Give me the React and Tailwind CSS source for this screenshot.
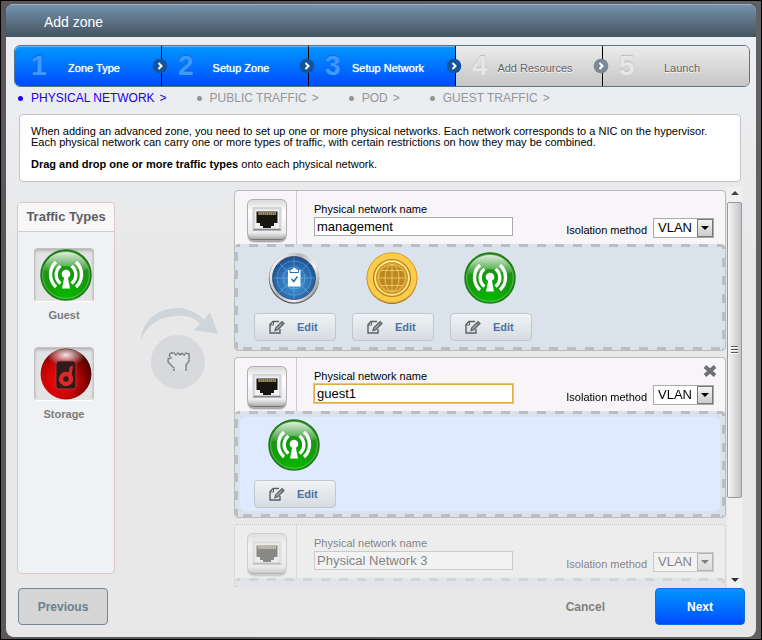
import React, { useState } from 'react';

const steps = [
    { label: 'Zone Type', done: true },
    { label: 'Setup Zone', done: true },
    { label: 'Setup Network', done: true },
    { label: 'Add Resources', done: false },
    { label: 'Launch', done: false },
];

const subSteps = ['PHYSICAL NETWORK', 'PUBLIC TRAFFIC', 'POD', 'GUEST TRAFFIC'];

const networks = [
    { id: 1, name: 'management', traffic: ['management', 'public', 'guest'] },
    { id: 2, name: 'guest1', traffic: ['guest'], removable: true, active: true },
    { id: 3, name: 'Physical Network 3', traffic: [], disabled: true },
];

// Gradients shared by all the round icons
function IconDefs() {
    return (
        <svg className="absolute h-0 w-0" aria-hidden="true">
            <defs>
                <radialGradient id="green" cx="50%" cy="95%" r="95%">
                    <stop offset="0" stopColor="#08b800" />
                    <stop offset="0.5" stopColor="#149c0c" />
                    <stop offset="1" stopColor="#2a8a22" />
                </radialGradient>
                <linearGradient id="gloss" x1="0" y1="0" x2="0" y2="1">
                    <stop offset="0" stopColor="#fff" stopOpacity="0.85" />
                    <stop offset="1" stopColor="#fff" stopOpacity="0.08" />
                </linearGradient>
                <radialGradient id="red" cx="35%" cy="65%" r="70%">
                    <stop offset="0" stopColor="#f00808" />
                    <stop offset="0.5" stopColor="#c80404" />
                    <stop offset="1" stopColor="#4a0000" />
                </radialGradient>
                <radialGradient id="redGloss" cx="50%" cy="30%" r="55%">
                    <stop offset="0" stopColor="#fff" stopOpacity="0.9" />
                    <stop offset="1" stopColor="#fff" stopOpacity="0" />
                </radialGradient>
                <linearGradient id="chrome" x1="0" y1="0.2" x2="1" y2="0.8">
                    <stop offset="0" stopColor="#fff" />
                    <stop offset="0.4" stopColor="#b8b8b8" />
                    <stop offset="0.7" stopColor="#f4f4f4" />
                    <stop offset="1" stopColor="#8a8a8a" />
                </linearGradient>
                <radialGradient id="blue" cx="50%" cy="60%" r="60%">
                    <stop offset="0" stopColor="#4aa0dc" />
                    <stop offset="0.6" stopColor="#2c70b4" />
                    <stop offset="1" stopColor="#1c4c8c" />
                </radialGradient>
                <linearGradient id="plate" x1="0" y1="0" x2="0" y2="1">
                    <stop offset="0" stopColor="#d8d6d7" />
                    <stop offset="0.3" stopColor="#fff" />
                    <stop offset="0.85" stopColor="#ececec" />
                    <stop offset="1" stopColor="#b4b4b4" />
                </linearGradient>
            </defs>
        </svg>
    );
}

function GuestIcon() {
    return (
        <svg viewBox="0 0 52 52" className="size-[52px]">
            <circle cx="26" cy="26" r="25" fill="url(#green)" stroke="#1f7a18" strokeWidth="1.5" />
            <circle cx="26" cy="26" r="23.300" fill="none" stroke="#6cc064" strokeWidth="0.800" />
            <path d="M4 22 C5 9 15 3 26 3 C37 3 46 10 48 20 C40 24 34 17 25 17 C17 17 11 24 4 22Z" fill="url(#gloss)" />
            <g fill="none" stroke="#fff" strokeWidth="3.400">
                <path d="M20.500 17 A11 11 0 0 0 20.500 34.500" />
                <path d="M31.500 17 A11 11 0 0 1 31.500 34.500" />
                <path d="M16 13 A17 17 0 0 0 16 38" />
                <path d="M36 13 A17 17 0 0 1 36 38" />
            </g>
            <circle cx="26" cy="25" r="4.300" fill="#fff" />
            <path d="M24.500 27 H27.500 L30 39.500 H22 Z" fill="#fff" />
        </svg>
    );
}

function StorageIcon() {
    return (
        <svg viewBox="0 0 52 52" className="size-[52px]">
            <circle cx="26" cy="26" r="25.400" fill="url(#red)" />
            <ellipse cx="26" cy="11" rx="18" ry="10" fill="url(#redGloss)" />
            <rect x="16" y="13" width="20" height="28" rx="3" fill="#321a1a" stroke="#a84848" strokeWidth="0.800" />
            <circle cx="26" cy="31" r="5" fill="none" stroke="#e02828" strokeWidth="4.400" />
            <path d="M28.500 27 L29.500 19 L33 17.500 L31.500 28Z" fill="#e02828" />
        </svg>
    );
}

function ManagementIcon() {
    return (
        <svg viewBox="0 0 52 52" className="size-[52px]">
            <circle cx="26" cy="26.500" r="25.200" fill="#5a5a5c" />
            <circle cx="26.300" cy="25.500" r="24.900" fill="url(#chrome)" />
            <circle cx="26" cy="26" r="21.500" fill="url(#blue)" stroke="#2a4a70" strokeWidth="0.800" />
            <g fill="none" stroke="#8cd0f4" strokeWidth="0.800" opacity="0.500">
                <circle cx="26" cy="26" r="17" />
                <circle cx="26" cy="26" r="11" />
                <path d="M26 5 V47 M5 26 H47 M11 11 L41 41 M41 11 L11 41" />
            </g>
            <path d="M20 18 H32.500 V34.500 H20 Z" fill="#fff" />
            <path d="M22 20.500 V17 H24 Q26.200 13 28.500 17 H30.500 V20.500 Z" fill="#fff" stroke="#2c70b4" strokeWidth="1" />
            <path d="M23.500 27 L25.800 29.500 L29.500 24.500" fill="none" stroke="#2c70b4" strokeWidth="1.600" />
        </svg>
    );
}

function PublicIcon() {
    return (
        <svg viewBox="0 0 52 52" className="size-[52px]">
            <circle cx="26" cy="26.600" r="25.300" fill="#9a6c14" />
            <circle cx="26" cy="25.700" r="25" fill="#fbcb4c" stroke="#d8a02c" strokeWidth="1" />
            <circle cx="26" cy="26" r="18.500" fill="#e8b030" stroke="#b8821c" strokeWidth="1.200" />
            <circle cx="26" cy="26" r="16.800" fill="#d49c28" stroke="#fff0a0" strokeWidth="1.400" />
            <circle cx="26" cy="26" r="13.500" fill="#bd8820" />
            <g fill="none" stroke="#f0c868" strokeWidth="0.900">
                <circle cx="26" cy="26" r="13.500" />
                <ellipse cx="26" cy="26" rx="7" ry="13.500" />
                <path d="M26 12.500 V39.500 M12.500 26 H39.500 M15 18.500 H37 M15 33.500 H37" />
            </g>
        </svg>
    );
}

function PortIcon() {
    return (
        <svg viewBox="0 0 42 46" className="h-[46px] w-[42px]">
            <rect x="1" y="5" width="40" height="40" rx="7" fill="#000" opacity="0.120" />
            <rect x="2" y="4" width="38" height="40" rx="6" fill="#000" opacity="0.200" />
            <rect x="2" y="4" width="38" height="38" rx="5" fill="#77757a" />
            <rect x="1.500" y="1.500" width="39" height="39" rx="5" fill="url(#plate)" stroke="#b4aeb2" strokeWidth="1" />
            <path d="M6.500 9 H35.500 V32.500 H6.500 Z" fill="#d3d5d8" />
            <path d="M6.500 32.500 L8.500 30.500 H33.500 L35.500 32.500Z" fill="#85888c" />
            <path d="M9 11.500 H33 V30.500 H9 Z" fill="#f2f2f4" />
            <path d="M10.500 13.500 H31.500 V25 H28 V28 H25 V30 H17 V28 H14 V25 H10.500 Z" fill="#17150f" />
            <path d="M12.500 15.500 H30" stroke="#d8c080" strokeWidth="3" strokeDasharray="1.200 0.800" />
        </svg>
    );
}

function EditIcon() {
    return (
        <svg viewBox="0 0 16 14" className="h-[14px] w-4" fill="none" stroke="#5c6064" strokeWidth="1.400">
            <path d="M10 1.500 H4 L1 4.500 V13 H11 V9" />
            <path d="M4.500 1.500 V5 H1" strokeWidth="1" />
            <path d="M6 10.500 L6.800 7.800 L13 1.500 L15 3.500 L8.700 9.700 Z" fill="#a4a8ac" strokeWidth="1.200" />
            <path d="M11.600 3 L13.600 5" strokeWidth="1" />
        </svg>
    );
}

const trafficIcons = {
    management: ManagementIcon,
    public: PublicIcon,
    guest: GuestIcon,
    storage: StorageIcon,
};

function Stepper() {
    return (
        <ol className="mr-[6px] ml-2 mt-2 flex h-[42px] rounded-md border border-[#5b7388]">
            {steps.map((step, index) => (
                <li
                    key={step.label}
                    className={`relative flex flex-1 items-center first:rounded-l-[5px] last:rounded-r-[5px] ${
                        step.done
                            ? 'bg-linear-to-b from-[#0d96ff] to-[#0048ff] text-white shadow-[inset_0_1px_#6cb4f4]'
                            : 'bg-linear-to-b from-[#ececec] to-[#c6c6c6] text-[#646464]'
                    } ${index < steps.length - 1 ? 'border-r border-black' : ''}`}
                >
                    <span
                        className={`w-8 pl-4 text-[28px] leading-7 font-bold ${
                            step.done
                                ? 'text-[#4098fd] [text-shadow:0_-1px_1px_#1468d8]'
                                : 'text-[#e6e6e6] [text-shadow:0_-1px_1px_#bcbcbc]'
                        }`}
                    >
                        {index + 1}
                    </span>
                    <span
                        className={`flex-1 pt-1 pr-5 text-center text-[11px] ${
                            step.done ? '[text-shadow:0_0_1px_#fff]' : '[text-shadow:0_1px_1px_#fff]'
                        }`}
                    >
                        {step.label}
                    </span>
                    {index < steps.length - 1 && (
                        <svg viewBox="0 0 16 16" className="absolute -right-[7px] z-10 size-4">
                            <circle cx="8" cy="8" r="7.300" fill={step.done ? '#15549c' : '#7c8898'} />
                            <path d="M6.500 5 L9.500 8 L6.500 11" fill="none" stroke="#fff" strokeWidth="2" />
                        </svg>
                    )}
                </li>
            ))}
        </ol>
    );
}

function TrafficType({ type, label }) {
    const Icon = trafficIcons[type];
    return (
        <div className="flex flex-col items-center">
            <div className="flex h-[54px] w-[60px] items-center justify-center rounded border border-[#c2c2c2] border-b-white bg-[#e3e3e3] pl-[3px] shadow-[inset_0_2px_3px_#b4b4b4]">
                <Icon />
            </div>
            <span className="mt-[5px] text-[11px] leading-4 font-bold text-[#7b7b7b]">{label}</span>
        </div>
    );
}

function DragHint() {
    return (
        <div className="flex w-[119px] shrink-0 justify-center pt-[117px] pl-[10px]">
            <svg viewBox="0 0 80 88" className="h-[88px] w-20">
                <path d="M1 36 C2 14 22 3 39 4 C50 5 58 9 64 16 L70 8 L78 30 L54 26 L60 20 C53 12 44 11 36 12 C20 13 7 20 1 36Z" fill="#d0d5d9" />
                <circle cx="38" cy="58" r="27" fill="#d7d9dc" />
                <path
                    d="M34 67 V64 L31 61 L28 58 V55 L31 54 L29 51 L31 49 H34 L36 51 L38 49 L40 51 L42 49 L44 51 L46 49 L49 50 V57 L46 61 V67"
                    fill="#dfe0e2"
                    stroke="#6c7179"
                    strokeWidth="1.400"
                    strokeDasharray="2 0.400"
                />
            </svg>
        </div>
    );
}

function NetworkCard({ network }) {
    const [name, setName] = useState(network.name);
    const nameId = `name-${network.id}`;
    const methodId = `method-${network.id}`;

    return (
        <section
            className={`shrink-0 rounded border bg-[#f7f5f7] ${
                network.disabled ? 'border-dotted border-[#999] opacity-45' : 'border-[#bbb]'
            }`}
        >
            <div className="relative flex h-[53px]">
                <div className="w-[62px] border-r border-[#ccc] pt-[7px] pl-[11px]">
                    <PortIcon />
                </div>
                <div className="flex flex-col pt-[11px] pl-[17px]">
                    <label htmlFor={nameId} className="text-[11px] leading-[15px]">Physical network name</label>
                    <input
                        id={nameId}
                        value={name}
                        disabled={network.disabled}
                        onChange={(e) => setName(e.target.value)}
                        autoFocus={network.active}
                        className="h-[19px] w-[199px] border border-[#aaa] bg-white px-[2px] text-[13px] focus:border-[#e0a94a] focus:outline focus:outline-[#ecc27c]"
                    />
                </div>
                <div className="ml-auto flex items-end gap-[6px] pr-[11px] pb-[6px]">
                    <label htmlFor={methodId} className="text-[11px] leading-4">Isolation method</label>
                    <div className="relative">
                        <select
                            id={methodId}
                            disabled={network.disabled}
                            className="block h-5 w-[61px] appearance-none border border-[#aaa] bg-white pl-1 text-[13px] leading-4"
                        >
                            <option>VLAN</option>
                            <option>GRE</option>
                        </select>
                        <span className="pointer-events-none absolute inset-y-px right-px flex w-4 items-center justify-center border border-[#777] bg-linear-to-b from-[#f4f4f4] to-[#ccc]">
                            <svg viewBox="0 0 8 4" className="h-1 w-2"><path d="M0 0 H8 L4 4Z" /></svg>
                        </span>
                    </div>
                </div>
                {network.removable && (
                    <button aria-label="Remove network" className="absolute top-[7px] right-2">
                        <svg viewBox="0 0 14 12" className="h-3 w-[14px]">
                            <path d="M2 1.500 L12 10.500 M12 1.500 L2 10.500" stroke="#6c7074" strokeWidth="3.800" />
                        </svg>
                    </button>
                )}
            </div>

            {/* Drop zone, the dashes are four repeating backgrounds */}
            <div className="min-h-[106px] rounded-sm bg-[#dae2eb] bg-[image:linear-gradient(90deg,#bbbdc1_50%,transparent_50%),linear-gradient(90deg,#bbbdc1_50%,transparent_50%),linear-gradient(#bbbdc1_50%,transparent_50%),linear-gradient(#bbbdc1_50%,transparent_50%)] bg-size-[18px_3px,18px_3px,3px_18px,3px_18px] bg-position-[14px_0,8px_100%,0_8px,100%_14px] [background-repeat:repeat-x,repeat-x,repeat-y,repeat-y] px-[5px] py-[6px]">
                <ul className={`flex min-h-[94px] gap-4 rounded-md px-[14px] pt-[2px] ${network.active ? 'bg-[#dfe9ff]' : ''}`}>
                    {network.traffic.map((type) => {
                        const Icon = trafficIcons[type];
                        return (
                            <li key={type} className="flex flex-col gap-[9px]">
                                <span className="pl-[14px]"><Icon /></span>
                                <button className="flex h-7 w-[82px] items-center gap-3 rounded border border-[#c3c6ca] bg-linear-to-b from-[#f1f3f5] to-[#d5dce1] pl-[14px] text-[11px] font-bold text-[#4b70a8]">
                                    <EditIcon />
                                    Edit
                                </button>
                            </li>
                        );
                    })}
                </ul>
            </div>
        </section>
    );
}

function ScrollBar() {
    return (
        <div className="mr-[14px] flex w-[15px] shrink-0 flex-col items-center bg-[#f0f0f0]">
            <svg viewBox="0 0 8 4" className="mt-1 mb-[7px] h-1 w-2 shrink-0"><path d="M0 4 L4 0 L8 4Z" fill="#444" /></svg>
            <div className="flex w-full basis-[296px] flex-col items-center justify-center gap-px rounded-xs border border-[#999] bg-linear-to-r from-[#f5f5f5] to-[#c4c5c9]">
                <span className="h-[2px] w-[7px] border-b border-white bg-[#555]" />
                <span className="h-[2px] w-[7px] border-b border-white bg-[#555]" />
                <span className="h-[2px] w-[7px] border-b border-white bg-[#555]" />
            </div>
            <svg viewBox="0 0 8 4" className="mt-auto mb-[5px] h-1 w-2 shrink-0"><path d="M0 0 H8 L4 4Z" fill="#333" /></svg>
        </div>
    );
}

function App() {
    return (
        <div className="flex h-screen flex-col border border-black bg-linear-to-r from-[#5c575a] to-[#5f6163] pt-[3px] pr-[5px] pb-[2px] pl-[5px] font-['Liberation_Sans',Arial,sans-serif] text-black">
            <IconDefs />
            <main className="flex min-h-0 flex-1 flex-col overflow-hidden rounded-lg bg-linear-to-b from-[#ecf0f5] via-[#e8e8e8] via-40% to-[#e8e8e8]">
                <h1 className="h-[33px] shrink-0 border-t border-[#9eb0c0] bg-linear-to-b from-[#7592ae] to-[#44545f] pl-[38px] text-[14px] leading-[34px] text-white">
                    Add zone
                </h1>

                <div className="shrink-0">
                    <Stepper />
                    <ul className="flex h-[22px] items-center gap-[30px] pl-3 text-[12px]">
                        {subSteps.map((label, index) => (
                            <li key={label} className={`flex items-center ${index === 0 ? 'text-[#1c00e8]' : 'text-[#959595]'}`}>
                                <span className="mr-2 size-[5px] rounded-full bg-current" />
                                {label}
                                <span className="ml-[5px]">&gt;</span>
                            </li>
                        ))}
                    </ul>
                </div>

                <div className="mt-[5px] mr-[15px] ml-[13px] shrink-0 rounded border border-[#c4c4c4] bg-white px-[11px] py-[11px] text-[11px] leading-[11px]">
                    <p>When adding an advanced zone, you need to set up one or more physical networks. Each network corresponds to a NIC on the hypervisor.</p>
                    <p>Each physical network can carry one or more types of traffic, with certain restrictions on how they may be combined.</p>
                    <p className="mt-[11px]"><strong>Drag and drop one or more traffic types</strong> onto each physical network.</p>
                </div>

                <div className="mt-[5px] flex min-h-0 flex-1">
                    <aside className="mt-[15px] mb-[13px] ml-[11px] w-[98px] shrink-0 rounded border border-[#dcc8ca] bg-[#eff1f4]">
                        <h2 className="rounded-t border-b border-[#dcc8ca] bg-[#f7f7f8] text-center text-[13px] leading-7 font-bold text-[#5e5e5e]">
                            Traffic Types
                        </h2>
                        <div className="flex flex-col gap-6 pt-4 pr-1">
                            <TrafficType type="guest" label="Guest" />
                            <TrafficType type="storage" label="Storage" />
                        </div>
                    </aside>

                    <DragHint />

                    <div className="mr-px flex min-w-0 flex-1 flex-col gap-[6px] overflow-hidden pt-[3px]">
                        {networks.map((network) => (
                            <NetworkCard key={network.id} network={network} />
                        ))}
                    </div>
                    <ScrollBar />
                </div>

                <div className="flex shrink-0 items-center pt-px pr-[11px] pb-3 pl-3 text-[12px] font-bold">
                    <button className="h-[37px] w-[90px] rounded border border-[#77859a] bg-[#d5d5d5] text-[#6a7f90]">Previous</button>
                    <button className="mr-[50px] ml-auto text-[#808080]">Cancel</button>
                    <button className="h-[37px] w-[90px] rounded border border-[#0d6fe0] bg-linear-to-b from-[#0b93ff] to-[#004bff] text-white">Next</button>
                </div>
            </main>
        </div>
    );
}

export default App;
